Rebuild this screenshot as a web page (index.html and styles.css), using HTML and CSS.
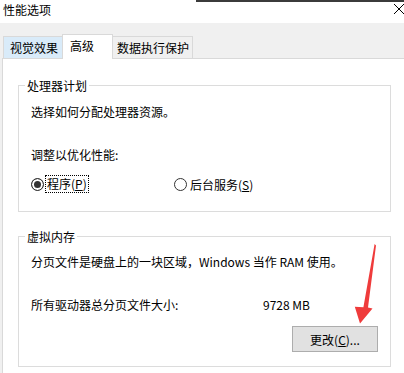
FILE: index.html
```html
<!DOCTYPE html>
<html lang="zh-CN">
<head>
  <meta charset="UTF-8">
  <meta name="viewport" content="width=device-width, initial-scale=1.0">
  <title>性能选项</title>
  <link rel="stylesheet" href="styles.css">
</head>

<body>
  <header class="titlebar">
    <span class="edge"></span>
    <h1>性能选项</h1>
    <svg class="close" width="10" height="10" viewBox="0 0 10 10">
      <path d="M0 0L10 10M10 0L0 10" stroke="#000" stroke-width="1" fill="none"/>
    </svg>
  </header>

  <nav class="tabs">
    <a class="tab hover">视觉效果</a>
    <a class="tab active">高级</a>
    <a class="tab last">数据执行保护</a>
  </nav>

  <main class="panel">
    <fieldset class="group cpu">
      <legend>处理器计划</legend>
      <p class="line">选择如何分配处理器资源。</p>
      <p class="line hint">调整以优化性能:</p>
      <div class="radios">
        <label class="radio first"><span class="dot checked"></span><span class="focus">程序(<u>P</u>)</span></label>
        <label class="radio"><span class="dot"></span><span class="text">后台服务(<u>S</u>)</span></label>
      </div>
    </fieldset>

    <fieldset class="group vm">
      <legend>虚拟内存</legend>
      <p class="line">分页文件是硬盘上的一块区域，Windows 当作 RAM 使用。</p>
      <div class="line size-row">
        <span class="size-label">所有驱动器总分页文件大小:</span>
        <span>9728 MB</span>
      </div>
      <div class="actions">
        <button type="button">更改(<u>C</u>)...</button>
      </div>
    </fieldset>
  </main>

  <!-- red pointer drawn over the dialog -->
  <svg class="arrow" width="404" height="373" viewBox="0 0 404 373">
    <polygon points="374.6,244 376,245.5 368,307.6 372.5,308.4 360,323.5 354.8,306.8 363.4,307.3" fill="#ef3b3b"/>
  </svg>
</body>
</html>
```

FILE: styles.css
```css
body {
  font-family: "Noto Sans CJK SC", sans-serif;
  font-size: 12px;
  color: #000;
  background-color: #f0f0f0;
  margin: 0;
  width: 404px;
  height: 373px;
  overflow: hidden;
  position: relative;
}

.titlebar {
  position: relative;
  height: 23px;
  background-color: #fff;
  display: flex;
  justify-content: space-between;
  align-items: flex-start;
}

.titlebar .edge {
  position: absolute;
  top: 0;
  left: 196px;
  right: 0;
  height: 2px;
  background-color: #3b3b3b;
}

.titlebar h1 {
  font-size: 12px;
  font-weight: normal;
  margin: 0;
  padding: 2px 0 0 3px;
  line-height: 16px;
}

.close {
  margin-top: 4px;
}

.tabs {
  display: flex;
  align-items: flex-end;
  height: 35px;
  padding-left: 3px;
}

.tab {
  box-sizing: border-box;
  height: 22px;
  line-height: 21px;
  border: 1px solid #d9d9d9;
  border-bottom: none;
  background-color: #f0f0f0;
  white-space: nowrap;
}

.tab.hover {
  width: 59px;
  padding-left: 6px;
  border-right: none;
  background-color: #d9ebf9;
}

.tab.active {
  position: relative;
  z-index: 1;
  width: 51px;
  height: 25px;
  margin-bottom: -1px;
  padding-left: 7px;
  background-color: #fff;
}

.tab.last {
  width: 80px;
  padding-left: 4px;
  border-left: none;
}

.panel {
  box-sizing: border-box;
  height: 315px;
  margin-left: 2px;
  padding: 18px 13px 0 15px;
  background-color: #fff;
  border-top: 1px solid #d9d9d9;
  border-left: 1px solid #d9d9d9;
}

.group {
  margin: 0;
  min-width: 0;
  border: 1px solid #dcdcdc;
  padding: 0 12px;
}

.group legend {
  margin-left: -6px;
  padding: 2px 2px 0;
  line-height: 14px;
}

.line {
  margin: 0;
  line-height: 18px;
  white-space: nowrap;
}

.cpu {
  padding-bottom: 18px;
}

.cpu .line {
  margin-top: 10px;
}

.cpu .hint {
  margin-top: 25px;
}

.radios {
  display: flex;
  margin-top: 11px;
  height: 18px;
  align-items: center;
}

.radio {
  display: flex;
  align-items: center;
}

.radio.first {
  width: 143px;
}

.dot {
  box-sizing: border-box;
  width: 13px;
  height: 13px;
  border: 1px solid #333;
  border-radius: 50%;
  background-color: #fff;
}

.dot.checked {
  background-color: #333;
  box-shadow: inset 0 0 0 2px #fff;
}

.focus {
  margin-left: 1px;
  padding: 0 1px;
  line-height: 16px;
  border: 1px dotted #000;
}

.radio .text {
  margin-left: 3px;
}

.vm {
  margin-top: 16px;
  padding-bottom: 14px;
}

.vm .line {
  margin-top: 9px;
}

.vm .size-row {
  display: flex;
  margin-top: 25px;
}

.size-label {
  width: 232px;
}

.actions {
  display: flex;
  justify-content: flex-end;
  margin-top: 12px;
}

.actions button {
  width: 86px;
  height: 26px;
  padding: 0;
  font-family: inherit;
  font-size: 12px;
  color: #000;
  background-color: #e1e1e1;
  border: 1px solid #adadad;
}

.arrow {
  position: absolute;
  top: 0;
  left: 0;
  pointer-events: none;
}
```
